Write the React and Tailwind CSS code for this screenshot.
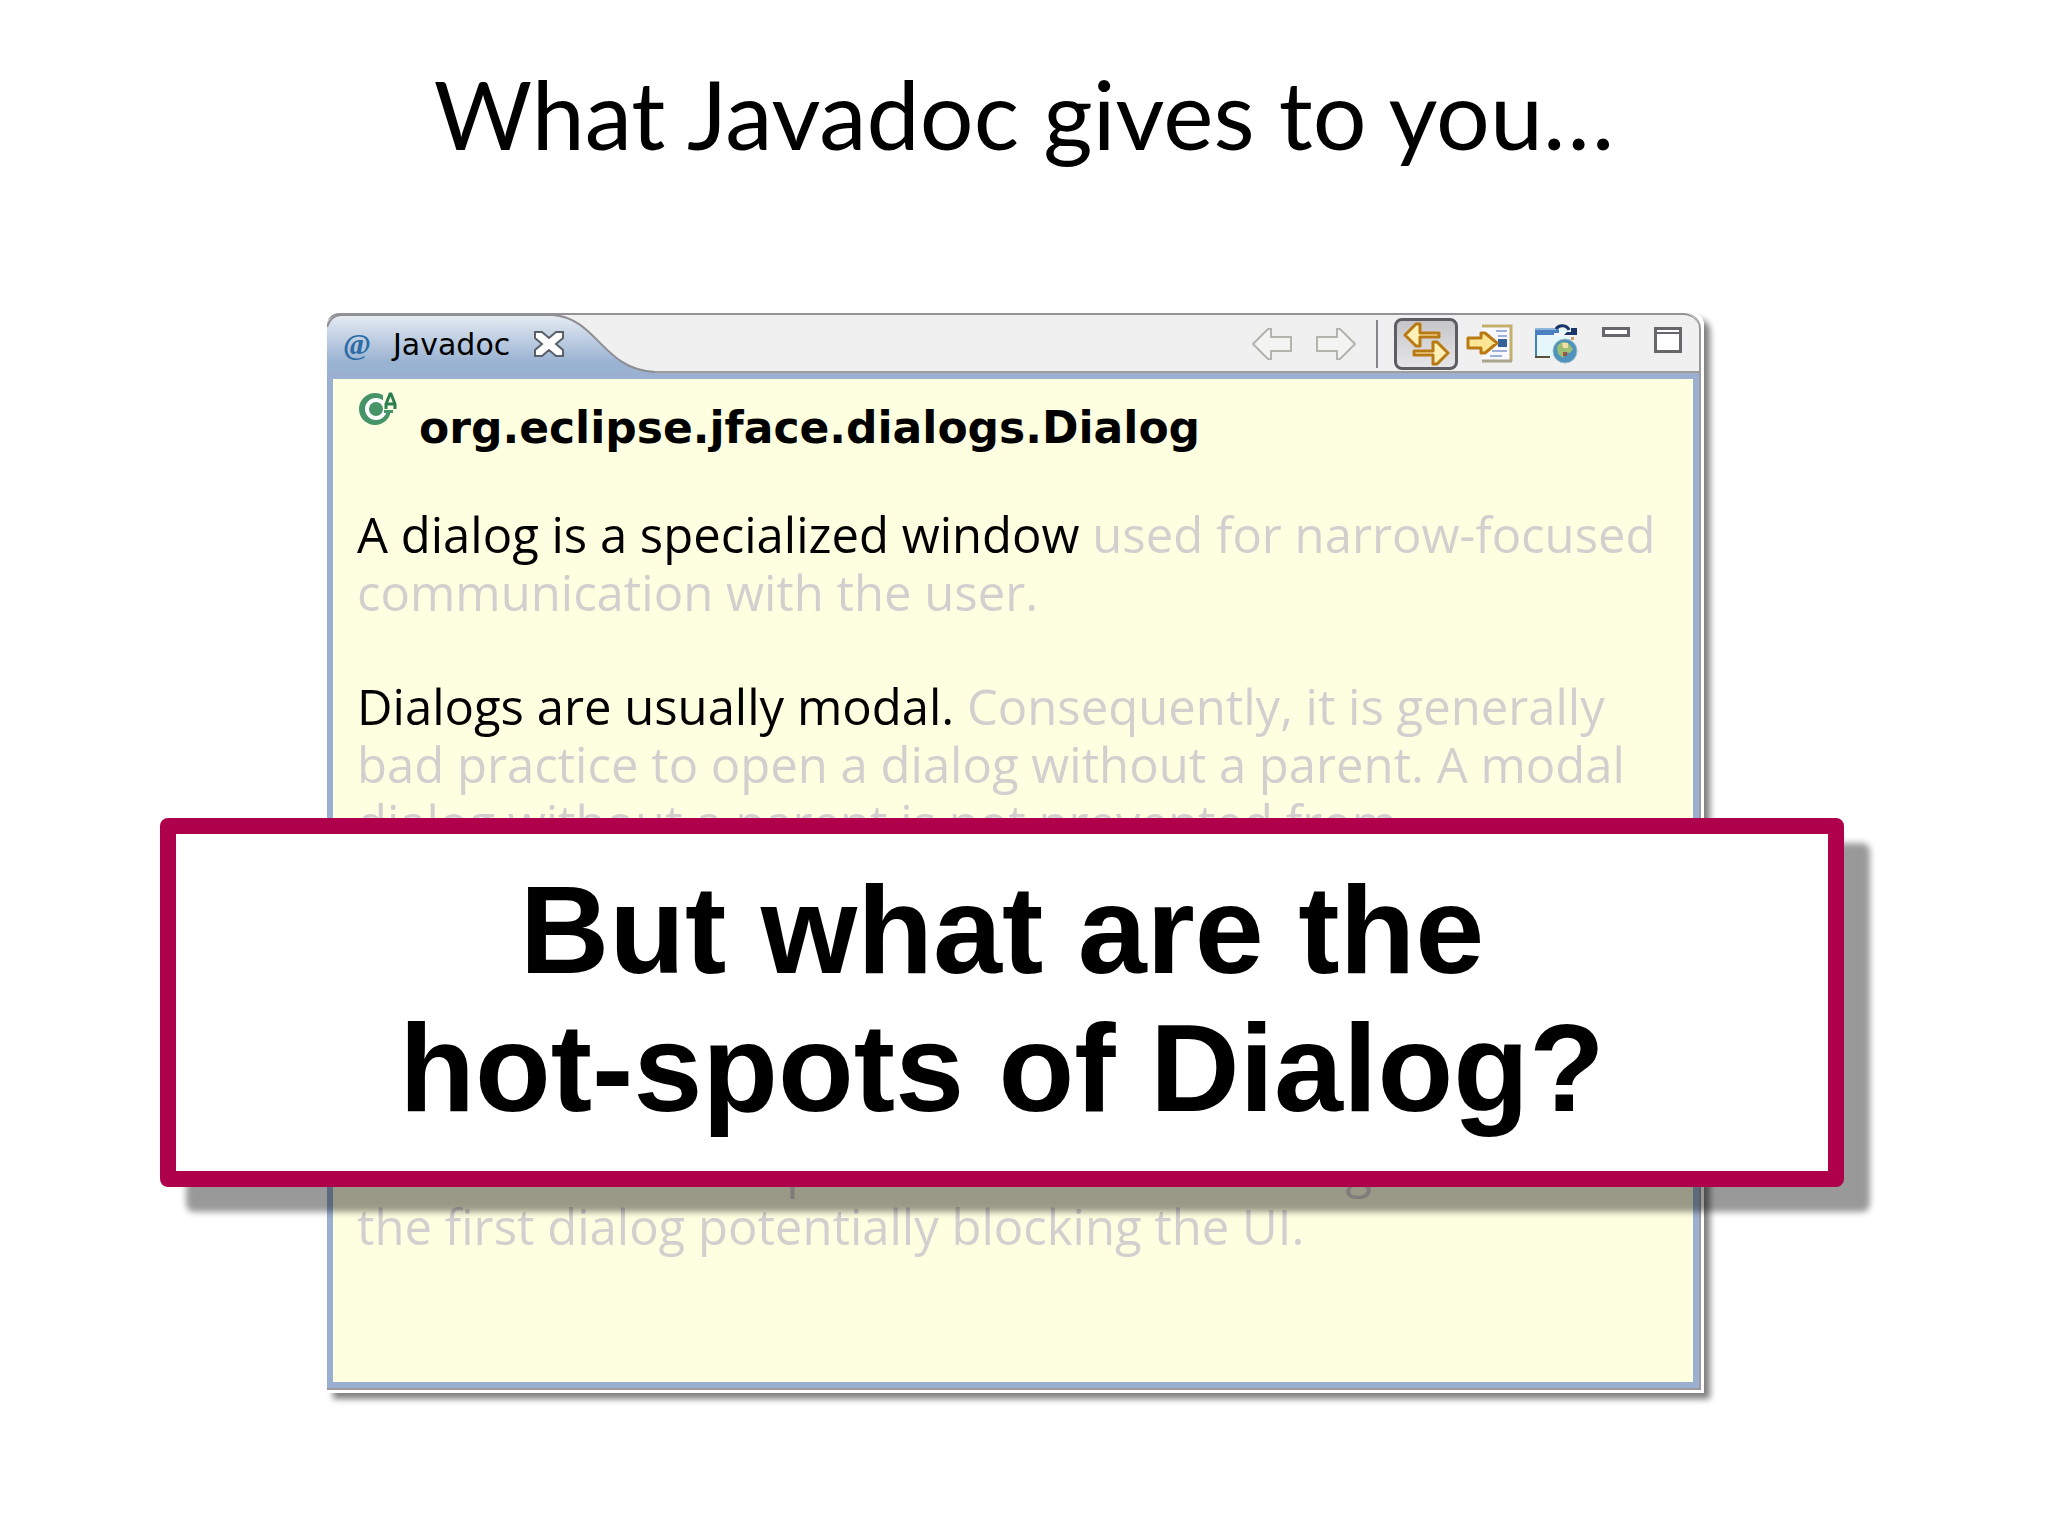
import clsx from 'clsx';

const nav = 'flex items-center justify-center';

function BackArrow() {
    return (
        <svg viewBox="0 0 40 32" className="h-8 w-10" fill="#f4f4f2" stroke="#b4b4ae" strokeWidth="2">
            <path d="M1 16 16 1h3v8h20v14H19v8h-3Z" />
        </svg>
    );
}

function ForwardArrow() {
    return (
        <svg viewBox="0 0 40 32" className="h-8 w-10" fill="#f4f4f2" stroke="#b4b4ae" strokeWidth="2">
            <path d="M39 16 24 1h-3v8H1v14h20v8h3Z" />
        </svg>
    );
}

function LinkIcon() {
    return (
        <svg viewBox="0 0 48 44" className="h-11 w-12" fill="#fff0b8" stroke="#b97a14" strokeWidth="3" strokeLinejoin="round">
            <path d="M3 13 14 2h4v9h19v4H18v9h-4Z" />
            <path d="M46 31 35 20h-4v9H12v4h19v9h4Z" />
        </svg>
    );
}

function ShowInputIcon() {
    return (
        <svg viewBox="0 0 48 40" className="h-10 w-12">
            <path d="M16 1h30v37H16Z" fill="#f8f8ff" />
            <path d="M16 2h29v35" fill="none" stroke="#c2b06c" strokeWidth="3" />
            <path d="M16 37h30" stroke="#a9a58c" strokeWidth="3" />
            <path d="M30 7h11M32 12h9M26 27h15M24 32h12" stroke="#9db0dc" strokeWidth="2" />
            <path d="M32 15h9v8h-9Z" fill="#36629c" />
            <path d="M2 14h13V9h4l12 10-12 10h-4v-5H2Z" fill="#ffe694" stroke="#b97a14" strokeWidth="3" strokeLinejoin="round" />
        </svg>
    );
}

function BrowserIcon() {
    return (
        <svg viewBox="0 0 44 40" className="h-10 w-11">
            <path d="M2 5h36v28H2Z" fill="#e6f7fc" />
            <path d="M2 8v25" stroke="#3d86b4" strokeWidth="2" />
            <path d="M1 33h15" stroke="#55543a" strokeWidth="2" />
            <path d="M1 4h24v7H1Z" fill="#4a80c0" />
            <path d="M1 4h24v2H1Z" fill="#8fb4dc" />
            <path d="M20 9h20v3H20Z" fill="#f4f4fb" />
            <path d="M22 5c3-5 11-4 13 1" fill="none" stroke="#1c3568" strokeWidth="3" />
            <path d="M43 4v7H30l3-3h4V4Z" fill="#1c3568" />
            <path d="M37 13h3v3h-3Z" fill="#d79a62" />
            <circle cx="31" cy="27" r="12" fill="#4f93bc" stroke="#9dbccb" strokeWidth="1" />
            <path d="M23 23q5-8 12-3l4 5-3 4-5-1-2 6-5-4Z" fill="#9dbf74" />
            <path d="M28 19h6v5h-5Z" fill="#f1dfa6" />
            <path d="M29 28h4v4h-4Z" fill="#a3543c" />
        </svg>
    );
}

function ClassIcon() {
    return (
        <svg viewBox="0 0 42 36" className="h-9 w-[42px]">
            <circle cx="18" cy="18" r="16" fill="#469468" />
            <circle cx="19" cy="18" r="9" fill="none" stroke="#fff" strokeWidth="4" />
            <path d="M27 14h9v8h-9Z" fill="#469468" />
            <path d="M26 1h16v18H26Z" fill="#feffe0" />
            <path d="M29 18v-5l4-10h1l4 10v5M29 13h9" fill="none" stroke="#2b7e50" strokeWidth="3" />
        </svg>
    );
}

function CloseIcon() {
    return (
        <svg viewBox="0 0 30 26" className="h-[26px] w-[30px]" fill="#fff" stroke="#5a6068" strokeWidth="2">
            <path d="M1 1h7l7 6 7-6h7v6l-7 6 7 6v6h-7l-7-6-7 6H1v-6l7-6-7-6Z" />
        </svg>
    );
}

function TabShape() {
    return (
        <svg viewBox="0 0 330 58" className="absolute top-0 left-0 h-[58px] w-[330px]">
            <defs>
                <linearGradient id="tab" x1="0" y1="0" x2="0" y2="1">
                    <stop offset="0" stopColor="#e6ecf3" />
                    <stop offset="0.8" stopColor="#9bb3d3" />
                </linearGradient>
            </defs>
            <path d="M0 58V12Q4 0 14 0H226C270 3 276 55 328 57V58Z" fill="url(#tab)" />
            <path d="M0 12Q4 0 14 0H226C270 3 276 55 328 57" fill="none" stroke="#8d8d92" strokeWidth="2" />
        </svg>
    );
}

function TitleBar() {
    return (
        <header className="relative flex h-[60px] items-start justify-between rounded-tl-xl rounded-tr-2xl border-y-2 border-t-[#939397] border-b-[#a09c9c] bg-[#f0f0f1]">
            <TabShape />
            <div className="relative flex h-[58px] items-center pl-4">
                <span className="w-[50px] font-['Liberation_Serif'] text-3xl font-bold text-[#2c6ca5]">@</span>
                <h2 className="mr-6 font-['DejaVu_Sans'] text-[30px]">Javadoc</h2>
                <button type="button" aria-label="Close"><CloseIcon /></button>
            </div>
            <div className="flex h-[58px] items-center pr-[17px]">
                <button type="button" aria-label="Back" className={clsx(nav, 'mr-6')}><BackArrow /></button>
                <button type="button" aria-label="Forward" className={clsx(nav, 'mr-5')}><ForwardArrow /></button>
                <span className="mr-4 h-12 w-[2px] bg-[#858589]" />
                <button type="button" aria-label="Link with selection" className={clsx(nav, 'mr-2 h-[52px] w-16 rounded-lg border-3 border-[#5d5d63] bg-linear-to-b from-[#c6c6c8] to-[#e6e6e8]')}>
                    <LinkIcon />
                </button>
                <button type="button" aria-label="Show input" className={clsx(nav, 'mr-5')}><ShowInputIcon /></button>
                <button type="button" aria-label="Open in browser" className={clsx(nav, 'mr-6')}><BrowserIcon /></button>
                <button type="button" aria-label="Minimize" className="mr-6 mb-6 h-[10px] w-7 border-3 border-[#66666b] bg-white" />
                <button type="button" aria-label="Maximize" className="mb-2 flex h-[26px] w-7 items-start border-3 border-[#66666b] bg-white">
                    <span className="h-1 w-full border-b-2 border-[#66666b]" />
                </button>
            </div>
        </header>
    );
}

function JavadocView() {
    return (
        <section className="mr-[344px] ml-[327px] rounded-t-xl border-r-3 border-b-3 border-white shadow-[6px_6px_6px_rgba(0,0,0,0.5)]">
            <div className="rounded-tl-xl rounded-tr-2xl border-r-2 border-b-2 border-[#9b9b9e]">
                <TitleBar />
                <article className="h-[1015px] border-6 border-[#9bb0d1] bg-[#feffe0] px-6 pt-3 whitespace-nowrap">
                    <div className="flex gap-5">
                        <ClassIcon />
                        <h3 className="pt-[7px] font-['DejaVu_Sans'] text-[44px] leading-[60px] font-bold">org.eclipse.jface.dialogs.Dialog</h3>
                    </div>
                    <div className="mt-[47px] font-['Open_Sans'] text-[49px] leading-[58px] text-[#d2d0cf]">
                        <p>
                            <span className="text-black">A dialog is a specialized window</span> used for narrow-focused<br />
                            communication with the user.
                        </p>
                        <p className="mt-14">
                            <span className="text-black">Dialogs are usually modal.</span> Consequently, it is generally<br />
                            bad practice to open a dialog without a parent. A modal<br />
                            dialog without a parent is not prevented from
                        </p>
                        <p className="mt-72">
                            one otherwise it is possible that the OS will give focus to<br />
                            the first dialog potentially blocking the UI.
                        </p>
                    </div>
                </article>
            </div>
        </section>
    );
}

export default function App() {
    return (
        <main className="relative min-h-screen bg-white text-black">
            <h1 className="pt-[53px] pb-[140px] text-center font-['Lato'] text-[95px] leading-[120px]">What Javadoc gives to you…</h1>
            <JavadocView />
            <aside className="absolute inset-x-0 top-[818px] mr-[204px] ml-40 rounded-lg border-16 border-[#af004b] bg-white pt-[27px] pb-[34px] text-center font-['Liberation_Sans'] text-[124px] leading-[138px] font-bold shadow-[26px_25px_6px_rgba(0,0,0,0.4)]">
                But what are the<br />hot-spots of Dialog?
            </aside>
        </main>
    );
}
